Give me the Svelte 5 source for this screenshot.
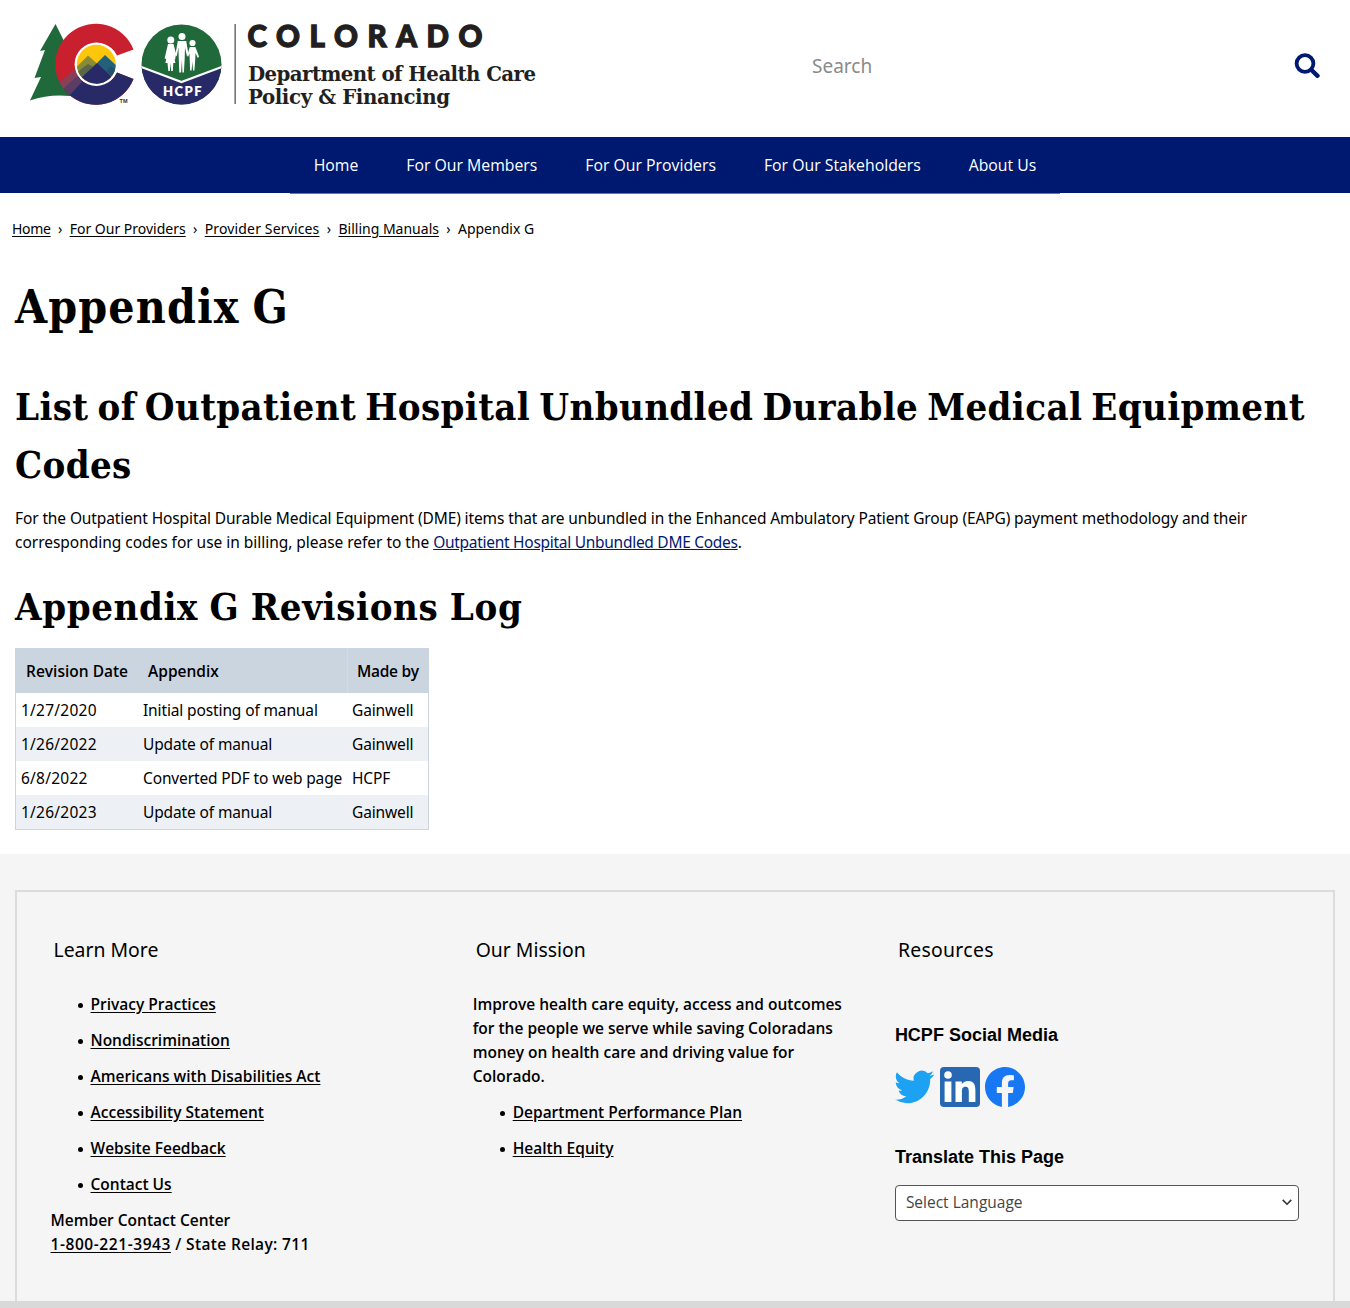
<script>
  const nav = ['Home', 'For Our Members', 'For Our Providers', 'For Our Stakeholders', 'About Us'];
  const crumbs = ['Home', 'For Our Providers', 'Provider Services', 'Billing Manuals'];
  const rows = [
    ['1/27/2020', 'Initial posting of manual', 'Gainwell'],
    ['1/26/2022', 'Update of manual', 'Gainwell'],
    ['6/8/2022', 'Converted PDF to web page', 'HCPF'],
    ['1/26/2023', 'Update of manual', 'Gainwell']
  ];
  const learn = ['Privacy Practices', 'Nondiscrimination', 'Americans with Disabilities Act', 'Accessibility Statement', 'Website Feedback', 'Contact Us'];
  const mission = ['Department Performance Plan', 'Health Equity'];
</script>

<header class="top">
  <svg class="logo" width="560" height="110" viewBox="20 15 560 110" role="img" aria-label="Colorado Department of Health Care Policy and Financing">
    <defs>
      <clipPath id="ring"><path d="M133.500 49.500 A40.500 40.500 0 1 0 133.500 79 L117 72.500 A21 21 0 1 1 117 55.500 Z" /></clipPath>
      <clipPath id="disc"><circle cx="96.300" cy="64.300" r="19.500" /></clipPath>
      <clipPath id="seal"><circle cx="181.500" cy="64.500" r="40" /></clipPath>
    </defs>
    <!-- Tree -->
    <path fill="#20693a" d="M55.500 24 L69 51 L64 51 L75 80 L81 98 Q55 92 30 100.500 L41 77 L34.500 78 L45 50 L40 51 Z" />
    <!-- Letter C with peaks inside -->
    <g clip-path="url(#ring)">
      <rect x="55" y="22" width="82" height="84" fill="#c9202f" />
      <path fill="#874057" d="M56 86 L77 67 L84 77 L64 96 Z" />
      <path fill="#272a66" d="M63 91 L79 76 L118 72 L140 80 L130 108 L76 108 Z" />
      <path fill="#5b3d66" d="M61 91 L77 76 L82 82 L68 97 Z" />
    </g>
    <circle cx="96.300" cy="64.300" r="21.700" fill="#fff" />
    <g clip-path="url(#disc)">
      <rect x="76" y="44" width="42" height="42" fill="#fdc60b" />
      <path fill="#8a8b35" d="M74 69.500 L88 55.500 L97 63.500 L84 84 L74 84 Z" />
      <path fill="#23617a" d="M97 63 L105 55 L120 69 L118 84 L96 84 Z" />
      <path fill="#59664a" d="M74 82 V76 L81 69 L88 64 L93 66.500 L84 76 Z" />
      <path fill="#272a66" d="M74 86 L80 79 L97 63 L120 85 L120 90 L74 90 Z" />
      <path fill="#23506f" d="M106 71 L111 66 L120 74 V84 Z" />
    </g>
    <text class="tm" x="119.500" y="103" textLength="8" lengthAdjust="spacingAndGlyphs">TM</text>
    <!-- Department seal -->
    <g clip-path="url(#seal)">
      <rect x="141" y="24" width="82" height="82" fill="#20693a" />
      <path fill="#272a66" d="M140 67 L181.500 82 L223 67 V106 H140 Z" />
      <path fill="none" stroke="#fff" stroke-width="2.200" d="M140 66.500 L181.500 82 L223 66.500" />
    </g>
    <g fill="#fff">
      <circle cx="170.800" cy="40" r="3.500" />
      <path d="M168 44 h5.500 l2.600 10 -1 5.500 -1.300 -1 v-3.500 l1.600 8 h-2.100 l-.5 8 h-1.600 l-.5 -8 -.8 8 h-1.600 l-.8 -8 h-2.100 l1.800 -9 -1 5 -1.600 -.5 Z" />
      <circle cx="182" cy="36.500" r="3.500" />
      <path d="M177.800 41 h8.400 l2.300 13.500 -1.500 2 -2 -9 -.3 11 -.8 14 h-1.500 l-.5 -13 -.8 13 h-1.800 l-.9 -25 -1.700 9 -1.300 -2 Z" />
      <circle cx="192.500" cy="43" r="3.100" />
      <path d="M189.800 47 h5.600 l3.600 9.500 -1.200 1.500 -2.300 -5 -.3 7 -.8 10.500 h-1.400 l-.6 -9 -.8 9 h-1.500 l-.6 -17 -1.500 3.500 -.6 -2 Z" />
    </g>
    <text class="hcpf" x="163" y="95.800" textLength="38.500">HCPF</text>
    <rect x="234.500" y="24" width="1.300" height="80" fill="#555" />
    <text class="state" x="247.500" y="46.500" textLength="235">COLORADO</text>
    <text class="dept" x="248" y="80.500" textLength="288">Department of Health Care</text>
    <text class="dept" x="248" y="104.200" textLength="202">Policy &amp; Financing</text>
  </svg>
  <div class="search">
    <span>Search</span>
    <svg width="26" height="26" viewBox="0 0 26 26" fill="none" stroke="#001970">
      <circle cx="11" cy="10.500" r="8.400" stroke-width="3.800" />
      <path d="M17.500 17 L23.500 22.800" stroke-width="4.400" stroke-linecap="round" />
    </svg>
  </div>
</header>

<nav class="bar">
  <div class="items">
    {#each nav as item}<a href="#top">{item}</a>{/each}
  </div>
</nav>

<main>
  <div class="crumbs">
    {#each crumbs as c}<a href="#top">{c}</a><i>›</i>{/each}<span>Appendix G</span>
  </div>
  <h1>Appendix G</h1>
  <h2 class="list">List of Outpatient Hospital Unbundled Durable Medical Equipment<br />Codes</h2>
  <p>
    For the Outpatient Hospital Durable Medical Equipment (DME) items that are unbundled in the Enhanced Ambulatory Patient Group (EAPG) payment methodology and their<br /><span class="refer">corresponding codes for use in billing, please refer to the</span>{' '}<a href="#top">Outpatient Hospital Unbundled DME Codes</a>.
  </p>
  <h2 class="log">Appendix G Revisions Log</h2>
  <table>
    <thead>
      <tr><th class="date">Revision Date</th><th class="name">Appendix</th><th class="by">Made by</th></tr>
    </thead>
    <tbody>
      {#each rows as r}
        <tr>{#each r as cell}<td>{cell}</td>{/each}</tr>
      {/each}
    </tbody>
  </table>
</main>

<footer>
  <div class="box">
    <section>
      <h3>Learn More</h3>
      <ul>{#each learn as l}<li><a href="#top">{l}</a></li>{/each}</ul>
      <div class="text">Member Contact Center<br /><span class="phone"><a href="#top">1-800-221-3943</a> / State Relay: 711</span></div>
    </section>
    <section>
      <h3>Our Mission</h3>
      <div class="text blurb">Improve health care equity, access and outcomes<br />for the people we serve while saving Coloradans<br />money on health care and driving value for<br />Colorado.</div>
      <ul>{#each mission as l}<li><a href="#top">{l}</a></li>{/each}</ul>
    </section>
    <section>
      <h3 class="resources">Resources</h3>
      <h4 class="social-title">HCPF Social Media</h4>
      <div class="social">
        <svg width="40" height="40" viewBox="0 0 24 24"><path fill="#1da1f2" d="M23.453 4.570a10 10 0 01-2.825.775 4.958 4.958 0 002.163-2.723c-.951.555-2.005.959-3.127 1.184a4.920 4.920 0 00-8.384 4.482C7.190 8.095 3.567 6.130 1.140 3.162a4.822 4.822 0 00-.666 2.475c0 1.710.870 3.213 2.188 4.096a4.904 4.904 0 01-2.228-.616v.060a4.923 4.923 0 003.946 4.827 4.996 4.996 0 01-2.212.085 4.936 4.936 0 004.604 3.417 9.867 9.867 0 01-6.102 2.105c-.390 0-.3-.023-.6-.067a13.995 13.995 0 007.057 2.209c9.053 0 13.998-7.496 13.998-13.985 0-.210 0-.420-.015-.630A9.935 9.935 0 0023.500 4.590z" /></svg>
        <svg width="40" height="40" viewBox="0 0 40 40">
          <rect width="40" height="40" rx="4" fill="#2867b2" />
          <circle cx="8" cy="8" r="3.800" fill="#fff" />
          <path fill="#fff" d="M4.600 14.500h6.800V35H4.600zM15.500 14.500h6.300v2.800c1-1.800 3.300-3.300 6.300-3.300 6.300 0 7.300 4.300 7.300 9.600V35h-6.600V25c0-2.600-.2-5.300-3.300-5.300-3.300 0-3.600 2.500-3.600 5.200V35h-6.400z" />
        </svg>
        <svg width="40" height="40" viewBox="0 0 24 24"><path fill="#1877f2" d="M24 12.073c0-6.627-5.373-12-12-12s-12 5.373-12 12c0 5.990 4.388 10.954 10.125 11.854v-8.385H7.078v-3.470h3.047V9.430c0-3.007 1.792-4.669 4.533-4.669 1.312 0 2.686.235 2.686.235v2.953H15.830c-1.491 0-1.956.925-1.956 1.874v2.250h3.328l-.532 3.470h-2.796v8.385C19.612 23.027 24 18.062 24 12.073z" /></svg>
      </div>
      <h4 class="translate-title">Translate This Page</h4>
      <div class="select">
        <span>Select Language</span>
        <svg width="10" height="7" viewBox="0 0 10 7" fill="none" stroke="#333" stroke-width="1.600"><path d="M.7.9 L5 5.200 L9.300.9" /></svg>
      </div>
    </section>
  </div>
</footer>
<div class="bottom"></div>

<style>
  :global(body) { background: #fff; }
  :global(#app) { height: 1308px; overflow: hidden; color: #000; font-family: 'Noto Sans', sans-serif; }
  a { color: inherit; }

  .top { height: 137px; display: flex; box-sizing: border-box; padding: 15px 30px 0 20px; justify-content: space-between; }
  .logo { display: block; overflow: visible; }
  .tm { font: 700 5px 'Liberation Sans', sans-serif; fill: #333; }
  .hcpf { font: 800 13px Lato, sans-serif; fill: #fff; }
  .state { font: 900 29.5px Lato, sans-serif; fill: #231f20; stroke: #231f20; stroke-width: 1.3px; }
  .dept { font: 700 19.8px 'DejaVu Serif', serif; fill: #231f20; }
  .search { width: 508px; height: 26px; margin-top: 38px; display: flex; align-items: center; justify-content: space-between; font-size: 19px; color: #8a8a8a; }

  .bar { height: 56px; background: #001970; display: flex; justify-content: center; }
  .items { display: flex; box-shadow: 0 1px 0 #6674a8; }
  .items a { padding: 0 24px; line-height: 56px; color: #fff; text-decoration: none; font-family: 'Open Sans', sans-serif; font-size: 15.8px; white-space: nowrap; }

  main { height: 661px; padding: 0 15px; }
  .crumbs { display: flex; margin-left: -3px; padding-top: 24px; height: 24px; line-height: 24px; font-size: 14px; }
  .crumbs a { text-underline-offset: 2px; }
  .crumbs i { width: 19px; text-align: center; font-style: normal; }
  .crumbs a:first-child { letter-spacing: -0.3px; }
  .crumbs a:nth-of-type(3) { letter-spacing: 0.15px; }
  h1, h2 { margin: 0; font-family: 'DejaVu Serif Condensed', 'DejaVu Serif', serif; font-stretch: condensed; font-weight: 700; white-space: nowrap; }
  h1 { margin-top: 32px; height: 68px; line-height: 68px; font-size: 46px; letter-spacing: 1.1px; word-spacing: -2.5px; }
  h2 { font-size: 38px; line-height: 58px; }
  .list { margin-top: 37px; letter-spacing: 0.36px; word-spacing: -3.2px; }
  p { margin: 12px 0 0; font-size: 15.5px; line-height: 24px; letter-spacing: -0.115px; white-space: nowrap; }
  p a { color: #001970; letter-spacing: -0.28px; }
  .refer { letter-spacing: -0.03px; }
  .log { margin-top: 24px; letter-spacing: 0.6px; word-spacing: -1px; }
  table { margin-top: 12px; border-collapse: separate; border-spacing: 0; border: 1px solid #cad5e0; width: 414px; table-layout: fixed; font-size: 15.5px; letter-spacing: -0.13px; }
  th { box-sizing: border-box; height: 44px; padding: 0 10px; background: #cbd5e0; text-align: left; font-family: 'Open Sans', sans-serif; font-weight: 600; letter-spacing: 0; white-space: nowrap; }
  .date { width: 122px; }
  .name { width: 209px; }
  .by { padding: 0 9px; border-left: 1px solid #d3dbe4; letter-spacing: -0.3px; }
  td { box-sizing: border-box; height: 34px; padding: 0 5px; white-space: nowrap; }
  td:first-child { letter-spacing: 0.24px; }
  tbody tr:nth-child(even) { background: #edf0f4; }

  footer { height: 447px; box-sizing: border-box; padding: 36px 15px 0; background: #f5f5f5; font: 600 15.5px/24px 'Open Sans', sans-serif; }
  .box { height: 411px; box-sizing: border-box; border: 2px solid #dcdcdc; border-bottom: 0; padding: 43px 34px 0 33.5px; display: grid; grid-template-columns: repeat(3, 404.5px); gap: 17.7px; }
  h3 { margin: 0; padding-left: 3px; font: 400 19.4px/30px 'Noto Sans', sans-serif; }
  .resources { letter-spacing: 0.3px; }
  ul { margin: 0; padding: 0 0 0 40px; }
  li { margin-bottom: 12px; list-style: none; display: flex; align-items: center; }
  li::before { content: ''; width: 5px; height: 5px; border-radius: 50%; background: #000; margin: 2px 8px 0 -13px; }
  h3 + ul, .blurb { margin-top: 27px; }
  .blurb { margin-bottom: 12px; white-space: nowrap; }
  .phone { letter-spacing: 0.35px; }
  .phone a { letter-spacing: 0.57px; }
  footer a { text-underline-offset: 2px; }
  h4 { margin: 0; font: 700 18px/24px 'Liberation Sans', sans-serif; }
  .social-title { margin-top: 58px; }
  .social { display: flex; gap: 5px; margin-top: 20.4px; }
  .translate-title { margin-top: 37.6px; }
  .select { box-sizing: border-box; height: 36px; margin-top: 16px; padding: 0 6px 0 10px; display: flex; align-items: center; justify-content: space-between; border: 1px solid #555; border-radius: 4px; background: #fff; color: #444; font-weight: 400; }
  .select span { padding-bottom: 2px; }
  .bottom { height: 7px; background: #d9d9d9; }
</style>
